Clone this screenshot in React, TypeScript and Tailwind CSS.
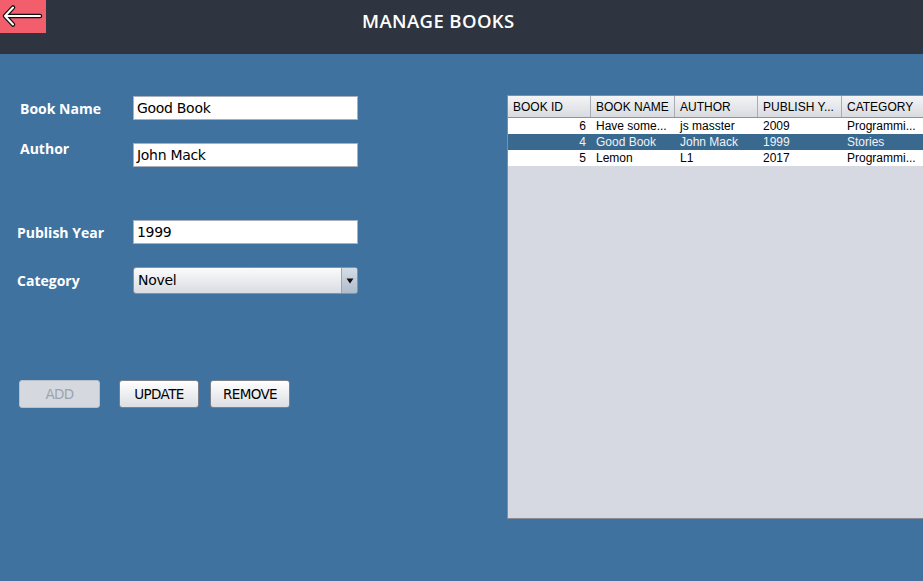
import React from "react";

type Book = { id: number; name: string; author: string; year: string; category: string };

const books: Book[] = [
  { id: 6, name: "Have some...", author: "js masster", year: "2009", category: "Programmi..." },
  { id: 4, name: "Good Book", author: "John Mack", year: "1999", category: "Stories" },
  { id: 5, name: "Lemon", author: "L1", year: "2017", category: "Programmi..." },
];

const cols = [
  { label: "BOOK ID", w: "w-[83px]" },
  { label: "BOOK NAME", w: "w-[84px]" },
  { label: "AUTHOR", w: "w-[83px]" },
  { label: "PUBLISH Y...", w: "w-[84px]" },
  { label: "CATEGORY", w: "flex-1" },
];

function BackArrow() {
  return (
    <svg width="46" height="33" viewBox="0 0 46 33">
      <g fill="none" strokeLinecap="round" strokeLinejoin="round">
        <path d="M5 16 H40 M5 16 L13 7.5 M5 16 L13 24.5" stroke="#111" strokeWidth="4.5" />
        <path d="M5 16 H40 M5 16 L13 7.5 M5 16 L13 24.5" stroke="#fff" strokeWidth="2" />
      </g>
    </svg>
  );
}

function Field({ value }: { value: string }) {
  return (
    <div className="w-[225px] h-[24px] bg-white border border-[#a9b0bb] flex items-center pl-[3px] text-[14px] text-black font-['DejaVu_Sans',sans-serif] tracking-[-0.3px]">
      {value}
    </div>
  );
}

function Btn({ label, disabled, w }: { label: string; disabled?: boolean; w: string }) {
  return (
    <div
      className={
        "h-[28px] rounded-[3px] flex items-center justify-center text-[13.5px] font-['DejaVu_Sans',sans-serif] tracking-[-0.6px] " +
        w +
        (disabled
          ? " bg-[#d5d9df] border border-[#b9c0ca] text-[#9ca3ad]"
          : " bg-gradient-to-b from-white to-[#dcdee3] border border-[#7c8088] text-black")
      }
    >
      {label}
    </div>
  );
}

export default function App() {
  return (
    <div className="w-[923px] h-[581px] bg-[#3f729f] overflow-hidden flex flex-col font-['Open_Sans',sans-serif]">
      <div className="h-[54px] bg-[#2f3540] flex items-start shrink-0">
        <button className="w-[46px] h-[33px] bg-[#f25e6c]">
          <BackArrow />
        </button>
        <div className="ml-[316px] mt-[7px] text-white text-[18.5px] font-semibold tracking-[0.4px]">MANAGE BOOKS</div>
      </div>

      <div className="flex flex-1">
        <div className="w-[507px] shrink-0 flex flex-col">
          <div className="flex items-center mt-[42px] pl-[20px]">
            <div className="w-[113px] text-white font-bold text-[14px]">Book Name</div>
            <Field value="Good Book" />
          </div>
          <div className="flex items-start mt-[23px] pl-[20px]">
            <div className="w-[113px] text-white font-bold text-[14px] -mt-[5px]">Author</div>
            <Field value="John Mack" />
          </div>
          <div className="flex items-center mt-[53px] pl-[17px]">
            <div className="w-[116px] text-white font-bold text-[14px]">Publish Year</div>
            <Field value="1999" />
          </div>
          <div className="flex items-center mt-[23px] pl-[17px]">
            <div className="w-[116px] text-white font-bold text-[14px]">Category</div>
            <div className="w-[225px] h-[27px] rounded-[3px] border border-[#8a929e] bg-gradient-to-b from-[#fbfbfc] to-[#d9dce2] flex items-stretch overflow-hidden">
              <div className="flex-1 flex items-center pl-[4px] text-[14px] text-black font-['DejaVu_Sans',sans-serif] tracking-[-0.3px]">
                Novel
              </div>
              <div className="w-[16px] border-l border-[#9aa3ae] bg-gradient-to-b from-[#d5dde6] to-[#aebccb] flex items-center justify-center">
                <svg width="8" height="6" viewBox="0 0 8 6">
                  <path d="M0.5 0.5 H7.5 L4 5.5 Z" fill="#111" />
                </svg>
              </div>
            </div>
          </div>
          <div className="flex items-center gap-[19px] mt-[86px] pl-[19px]">
            <Btn label="ADD" disabled w="w-[81px]" />
            <div className="flex gap-[11px]">
              <Btn label="UPDATE" w="w-[80px]" />
              <Btn label="REMOVE" w="w-[80px]" />
            </div>
          </div>
        </div>

        <div className="flex-1 mt-[41px] h-[424px] bg-[#d6d9e1] border-l border-t border-b border-[#878c96] flex flex-col font-['Liberation_Sans',sans-serif] text-[12px]">
          <div className="flex h-[22px] bg-gradient-to-b from-[#f4f4f6] to-[#d8dbe0] border-b border-[#8d929b]">
            {cols.map((c, i) => (
              <div
                key={c.label}
                className={
                  c.w +
                  " flex items-center pl-[5px] text-black whitespace-nowrap overflow-hidden " +
                  (i < cols.length - 1 ? "border-r border-[#a7acb5]" : "")
                }
              >
                {c.label}
              </div>
            ))}
          </div>
          {books.map((b, i) => {
            const sel = i === 1;
            return (
              <div
                key={b.id}
                className={"flex h-[16px] items-center " + (sel ? "bg-[#39698e] text-[#f0f3f7]" : "bg-white text-black")}
              >
                <div className="w-[83px] text-right pr-[5px]">{b.id}</div>
                <div className="w-[84px] pl-[5px] whitespace-nowrap">{b.name}</div>
                <div className="w-[83px] pl-[5px] whitespace-nowrap">{b.author}</div>
                <div className="w-[84px] pl-[5px]">{b.year}</div>
                <div className="flex-1 pl-[5px] whitespace-nowrap">{b.category}</div>
              </div>
            );
          })}
        </div>
      </div>
    </div>
  );
}
